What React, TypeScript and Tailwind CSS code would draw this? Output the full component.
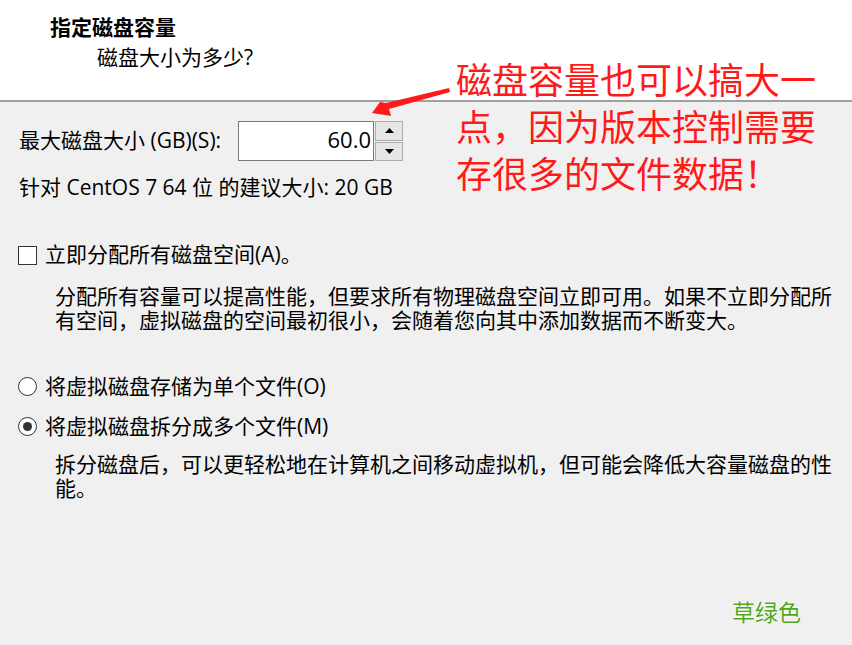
import React from "react";

const cjk = "font-['Open_Sans','Noto_Sans_CJK_SC',sans-serif]";

function SpinBox({ value }: { value: string }) {
  return (
    <div className="flex h-[40px]">
      <div className="w-[136px] h-full bg-white border border-[#7a7a7a] flex items-center justify-end pr-[2px] pb-[3px] text-[22px] text-black">
        {value}
      </div>
      <div className="flex flex-col w-[29px] h-full gap-[1px] pl-[1px]">
        <button className="flex-1 bg-[#e6e6e6] border border-[#adadad] flex items-center justify-center">
          <svg width="9" height="5" viewBox="0 0 9 5"><path d="M0 5 L4.5 0 L9 5 Z" fill="#000" /></svg>
        </button>
        <button className="flex-1 bg-[#e6e6e6] border border-[#adadad] flex items-center justify-center">
          <svg width="9" height="5" viewBox="0 0 9 5"><path d="M0 0 L4.5 5 L9 0 Z" fill="#000" /></svg>
        </button>
      </div>
    </div>
  );
}

function Radio({ checked, label }: { checked?: boolean; label: string }) {
  return (
    <div className="flex items-center h-[30px] pl-[18px]">
      <span className="w-[19px] h-[19px] rounded-full border border-[#333] bg-white flex items-center justify-center">
        {checked && <span className="w-[9px] h-[9px] rounded-full bg-[#333]" />}
      </span>
      <span className="ml-[8px] leading-[30px]">{label}</span>
    </div>
  );
}

export default function App() {
  return (
    <div className={`relative w-[852px] h-[645px] overflow-hidden bg-[#f0f0f0] text-[21px] text-black ${cjk}`}>
      {/* wizard page header */}
      <div className="h-[102px] bg-white border-b-2 border-[#a0a0a0] pt-[12px]">
        <div className="pl-[50px] leading-[30px] font-bold">指定磁盘容量</div>
        <div className="pl-[97px] leading-[30px]">磁盘大小为多少?</div>
      </div>

      <div className="pt-[19px]">
        <div className="flex items-center pl-[19px]">
          <span className="w-[219px]">最大磁盘大小 (GB)(S):</span>
          <SpinBox value="60.0" />
        </div>
        <div className="pl-[19px] mt-[11px] leading-[30px]">针对 CentOS 7 64 位 的建议大小: 20 GB</div>

        <div className="flex items-center h-[30px] pl-[18px] mt-[38px]">
          <span className="w-[19px] h-[19px] border border-[#333] bg-white" />
          <span className="ml-[8px]">立即分配所有磁盘空间(A)。</span>
        </div>
        <p className="pl-[55px] w-[840px] mt-[14px] leading-[24px]">
          分配所有容量可以提高性能，但要求所有物理磁盘空间立即可用。如果不立即分配所有空间，虚拟磁盘的空间最初很小，会随着您向其中添加数据而不断变大。
        </p>

        <div className="mt-[39px]">
          <Radio label="将虚拟磁盘存储为单个文件(O)" />
        </div>
        <div className="mt-[10px]">
          <Radio checked label="将虚拟磁盘拆分成多个文件(M)" />
        </div>
        <p className="pl-[55px] w-[840px] mt-[11px] leading-[24px]">
          拆分磁盘后，可以更轻松地在计算机之间移动虚拟机，但可能会降低大容量磁盘的性能。
        </p>
      </div>

      {/* red callout */}
      <svg className="absolute left-0 top-0 pointer-events-none" width="852" height="645">
        <polygon points="372,113 380,102 386,103 449,88 450,92 389,109 391,116" fill="#ff1a1a" />
      </svg>
      <div className={`absolute left-[456px] top-[55px] text-[36px] leading-[47px] text-[#ff1a1a] [text-shadow:0_0_1px_#fff] font-['Noto_Sans_CJK_SC',sans-serif]`}>
        磁盘容量也可以搞大一
        <br />
        点，因为版本控制需要
        <br />
        存很多的文件数据！
      </div>

      <div className="absolute left-[732px] top-[595px] text-[23px] leading-[32px] text-[#52a81c] [text-shadow:0_0_2px_#fff,0_0_2px_#fff] font-['Noto_Sans_CJK_SC',sans-serif]">
        草绿色
      </div>
    </div>
  );
}
